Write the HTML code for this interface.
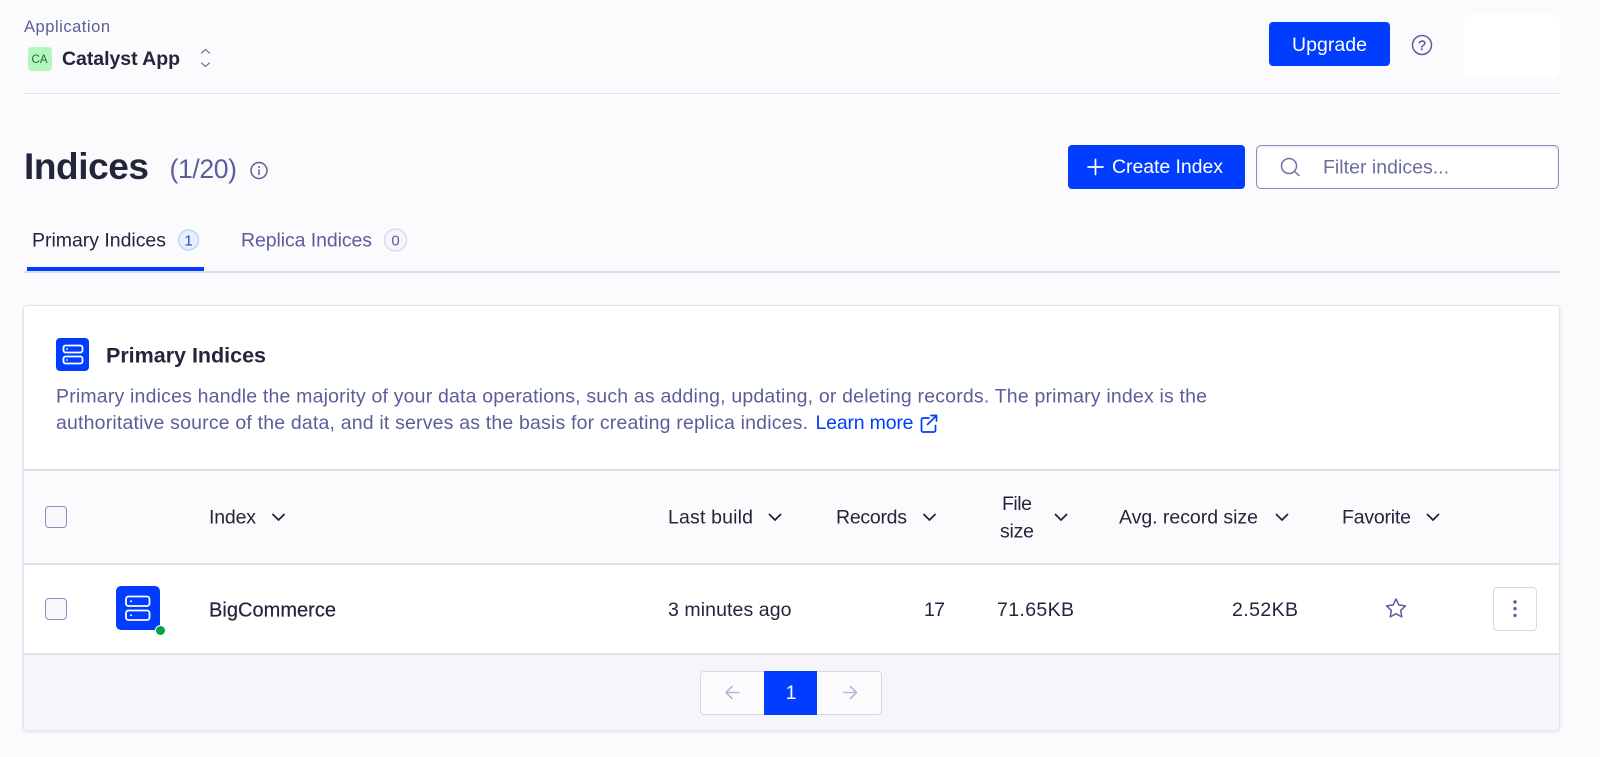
<!DOCTYPE html>
<html lang="en"><head><meta charset="utf-8"><title>Indices</title>
<style>
*{box-sizing:border-box}
html,body{margin:0;padding:0;width:1600px;height:757px;overflow:hidden;background:#fbfbfe}
body{position:relative;font-family:"Liberation Sans",sans-serif}
.b{position:absolute;display:block}
svg{position:absolute;left:0;top:0}
text{font-family:"Liberation Sans",sans-serif;fill:#23263b;font-size:19.5px}
.s{fill:#5a5e9a}
.w{fill:#fff}
.ic{fill:none;stroke:#5a5e9a;stroke-width:1.5;stroke-linecap:round;stroke-linejoin:round}
.ch{fill:none;stroke:#23263b;stroke-width:1.8;stroke-linecap:round;stroke-linejoin:round}
.sv{fill:none;stroke:#fff;stroke-width:1.8}
</style></head><body>
<div class="b" style="left:23px;top:93px;width:1537px;height:1px;background:#e4e4ee"></div>
<div class="b" style="left:1463px;top:14px;width:97px;height:64px;background:#fff;border-radius:10px"></div>
<div class="b" style="left:1269px;top:22px;width:121px;height:44px;background:#003dff;border-radius:4px"></div>
<div class="b" style="left:28px;top:47px;width:24px;height:24px;background:#b4f7bd;border-radius:4px"></div>
<div class="b" style="left:1068px;top:145px;width:177px;height:44px;background:#003dff;border-radius:4px"></div>
<div class="b" style="left:1256px;top:145px;width:303px;height:44px;background:#fff;border:1.5px solid #8a8ab5;border-radius:5px;box-shadow:inset 0 1px 3px rgba(90,94,154,.18)"></div>
<div class="b" style="left:24px;top:271px;width:1536px;height:2px;background:#dfdfea"></div>
<div class="b" style="left:27px;top:267px;width:177px;height:4px;background:#003dff"></div>
<div class="b" style="left:23px;top:305px;width:1537px;height:426px;background:#fff;border:1px solid #e4e4ee;border-radius:4px;box-shadow:0 1px 3px rgba(35,38,59,.12);overflow:hidden">
  <div class="b" style="left:0;top:163px;width:1535px;height:96px;background:#fbfbfe;border-top:2px solid #e0e0eb;border-bottom:2px solid #e0e0eb"></div>
  <div class="b" style="left:0;top:347px;width:1535px;height:78px;background:#f5f5fa;border-top:2px solid #e0e0eb"></div>
</div>
<div class="b" style="left:56px;top:338px;width:33px;height:33px;background:#003dff;border-radius:4px"></div>
<div class="b" style="left:45px;top:506px;width:22px;height:22px;background:#f8f8fc;border:1.5px solid #8f8fbd;border-radius:4px"></div>
<div class="b" style="left:45px;top:598px;width:22px;height:22px;background:#f8f8fc;border:1.5px solid #8f8fbd;border-radius:4px"></div>
<div class="b" style="left:116px;top:586px;width:44px;height:44px;background:#003dff;border-radius:5px"></div>
<div class="b" style="left:155.5px;top:625.5px;width:9px;height:9px;background:#06a24a;border-radius:50%;box-shadow:0 0 0 1px #fff"></div>
<div class="b" style="left:1493px;top:587px;width:44px;height:44px;background:#fff;border:1.5px solid #d6d6e7;border-radius:4px"></div>
<div class="b" style="left:700px;top:671px;width:182px;height:44px;background:#fbfbfe;border:1.5px solid #d6d6e7;border-radius:4px"></div>
<div class="b" style="left:764px;top:671px;width:53px;height:44px;background:#003dff"></div>

<svg width="1600" height="757" viewBox="0 0 1600 757" xmlns="http://www.w3.org/2000/svg">
<text x="24" y="32" class="s" style="font-size:16.5px" textLength="86">Application</text>
<text x="31.500" y="63" style="font-size:11.500px;fill:#1c6b3a" textLength="16">CA</text>
<text x="62" y="65" style="font-size:19.500px;font-weight:700" textLength="118">Catalyst App</text>
<path class="ic" style="stroke-width:1.1" d="M201.500 53L205.500 49.500L209.500 53M201.500 63L205.500 66.500L209.500 63"/>
<text x="1292" y="51" class="w" textLength="75">Upgrade</text>
<circle class="ic" cx="1422" cy="45" r="9.500"/>
<text x="1422" y="50" text-anchor="middle" class="s" stroke="#5a5e9a" stroke-width=".4" style="font-size:14px">?</text>

<text x="24" y="179" style="font-size:37px;font-weight:700" textLength="125">Indices</text>
<text x="169.500" y="178" class="s" style="font-size:26.500px" textLength="67.500">(1/20)</text>
<circle class="ic" cx="259" cy="170.500" r="8"/>
<path class="ic" d="M259 170v4.500"/><circle cx="259" cy="167" r="1" fill="#5a5e9a"/>

<path d="M1088 167h15M1095.500 159.500v15" fill="none" stroke="#fff" stroke-width="1.700" stroke-linecap="round"/>
<text x="1112" y="173" class="w" textLength="111">Create Index</text>
<circle class="ic" style="stroke:#6f71a5" cx="1289" cy="166" r="7.500"/><path class="ic" style="stroke:#6f71a5" d="M1294.500 171.500L1299 175.500"/>
<text x="1323" y="173.500" style="fill:#6b6d9f" textLength="126">Filter indices...</text>

<text x="32" y="246.500" style="font-size:19.500px" textLength="134">Primary Indices</text>
<circle cx="188.500" cy="240" r="10" fill="#e8effe" stroke="#b8cdf5" stroke-width="1.200"/>
<text x="188.500" y="245.500" text-anchor="middle" style="font-size:15px;fill:#1f4db8">1</text>
<text x="241" y="246.500" class="s" style="font-size:19.500px" textLength="131">Replica Indices</text>
<circle cx="395.500" cy="240" r="11" fill="#f5f5fa" stroke="#d6d6e7" stroke-width="1.200"/>
<text x="395.500" y="245.500" text-anchor="middle" class="s" style="font-size:15px">0</text>

<rect class="sv" x="63.500" y="345.500" width="19" height="7" rx="2"/>
<rect class="sv" x="63.500" y="356.500" width="19" height="7" rx="2"/>
<circle cx="67" cy="349" r=".9" fill="#fff"/><circle cx="67" cy="360" r=".9" fill="#fff"/>
<text x="106" y="362.500" style="font-size:21.500px;font-weight:700" textLength="160">Primary Indices</text>
<text x="56" y="402.500" class="s" style="font-size:19.500px" textLength="1151">Primary indices handle the majority of your data operations, such as adding, updating, or deleting records. The primary index is the</text>
<text x="56" y="429" class="s" style="font-size:19.500px" textLength="752">authoritative source of the data, and it serves as the basis for creating replica indices.</text>
<text x="815.500" y="429" style="font-size:19.500px;fill:#003dff" textLength="98">Learn more</text>
<path fill="none" stroke="#003dff" stroke-width="1.700" stroke-linecap="round" stroke-linejoin="round" d="M929 418h-6a1.500 1.500 0 0 0-1.500 1.500v11a1.500 1.500 0 0 0 1.500 1.500h11a1.500 1.500 0 0 0 1.500-1.500v-5M931 415.500h5.500v5.500M936.500 415.500L927.500 424.500"/>

<text x="209" y="523.300" textLength="47">Index</text>
<path class="ch" d="M273 514.500L278.500 520L284 514.500"/>
<text x="668" y="523.300" textLength="85">Last build</text>
<path class="ch" d="M769.500 514.500L775 520L780.500 514.500"/>
<text x="836" y="523.300" textLength="71">Records</text>
<path class="ch" d="M924 514.500L929.500 520L935 514.500"/>
<text x="1002" y="510" textLength="30">File</text>
<text x="1000" y="537.300" textLength="34">size</text>
<path class="ch" d="M1055.500 514.500L1061 520L1066.500 514.500"/>
<text x="1119" y="523.300" textLength="139">Avg. record size</text>
<path class="ch" d="M1276.500 514.500L1282 520L1287.500 514.500"/>
<text x="1342" y="523.300" textLength="69">Favorite</text>
<path class="ch" d="M1427.500 514.500L1433 520L1438.500 514.500"/>

<rect class="sv" x="126" y="596.500" width="23.500" height="9.500" rx="2.500"/>
<rect class="sv" x="126" y="610.500" width="23.500" height="9.500" rx="2.500"/>
<circle cx="131" cy="601.200" r="1" fill="#fff"/><circle cx="131" cy="615.200" r="1" fill="#fff"/>
<text x="209" y="616.700" style="font-size:20px" stroke="#23263b" stroke-width=".2" textLength="127">BigCommerce</text>
<text x="668" y="616" textLength="123.500">3 minutes ago</text>
<text x="924" y="616" textLength="21">17</text>
<text x="997" y="616" textLength="77">71.65KB</text>
<text x="1232" y="616" textLength="66">2.52KB</text>
<path class="ic" d="M1396 599l2.900 6 6.500.9-4.700 4.500 1.100 6.500-5.800-3.100-5.800 3.100 1.100-6.500-4.700-4.500 6.500-.9z"/>
<circle cx="1515" cy="602" r="1.700" fill="#5a5e9a"/><circle cx="1515" cy="608.700" r="1.700" fill="#5a5e9a"/><circle cx="1515" cy="615.400" r="1.700" fill="#5a5e9a"/>

<path fill="none" stroke="#b6b7d5" stroke-width="1.600" stroke-linecap="round" stroke-linejoin="round" d="M739 692.500h-12.500M732 686.500l-6 6 6 6M843.500 692.500h12.500M850.500 686.500l6 6-6 6"/>
<text x="791" y="699" text-anchor="middle" class="w">1</text>
</svg>
</body></html>
